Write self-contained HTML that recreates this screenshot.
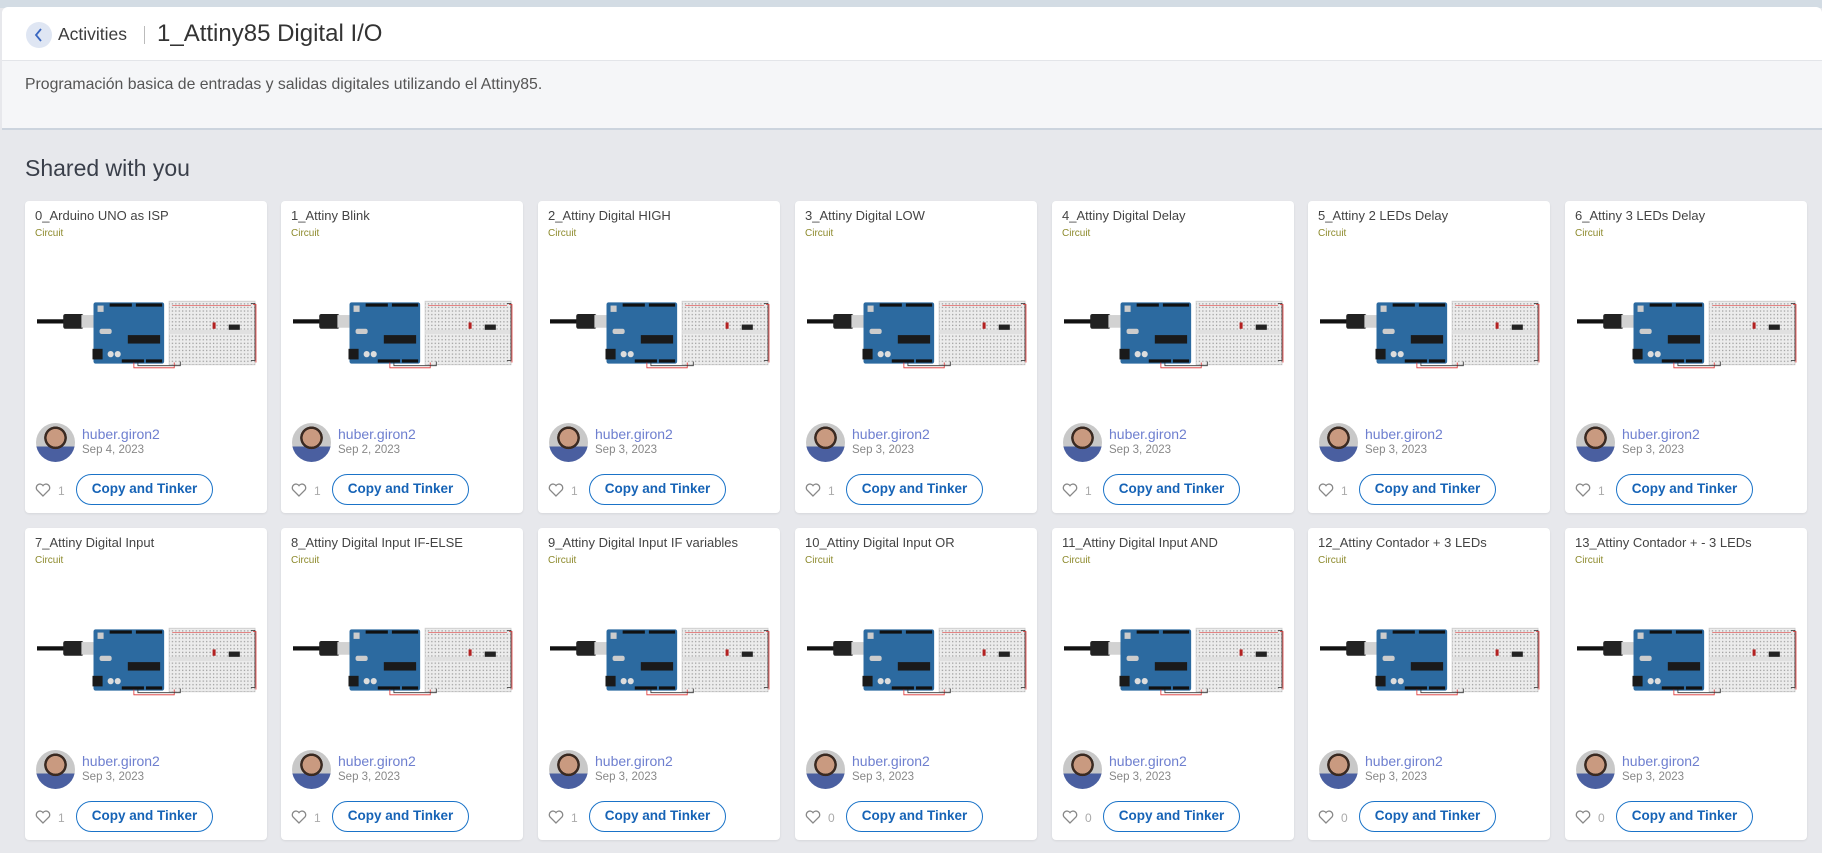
<!DOCTYPE html>
<html><head><meta charset="utf-8">
<style>
*{box-sizing:border-box;margin:0;padding:0}
body{width:1822px;height:853px;overflow:hidden;background:#e7e8ec;font-family:"Liberation Sans",sans-serif;position:relative}
.top{position:absolute;left:0;top:0;width:1822px;height:8px;background:#d3dce4}
.hdr{position:absolute;left:2px;top:7px;width:1820px;height:54px;background:#fff;border-radius:6px 6px 0 0;border-bottom:1px solid #e3e5e9}
.desc{position:absolute;left:2px;top:61px;width:1820px;height:69px;background:#f5f6f8;border-bottom:2px solid #ccd4de}
.back{position:absolute;left:26px;top:22px;width:26px;height:26px;border-radius:50%;background:#dfe6f3}
.crumb{position:absolute;left:58px;top:24px;font-size:17.5px;color:#3c3c3c}
.sep{position:absolute;left:144px;top:26px;width:1px;height:18px;background:#bbb}
.title{position:absolute;left:157px;top:20px;font-size:24px;color:#333}
.dtext{position:absolute;left:25px;top:76px;font-size:15.8px;color:#555}
.sh{position:absolute;left:25px;top:155px;font-size:23px;color:#3a3f4a}
.card{position:absolute;width:242px;height:312px;background:#fff;border-radius:4px;box-shadow:0 1px 2px rgba(0,0,0,.08)}
.card .t{position:absolute;left:10px;top:7px;font-size:13px;color:#444;white-space:nowrap}
.card .c{position:absolute;left:10px;top:27px;font-size:10px;color:#8d8a2c}
.card svg.img{position:absolute;left:12px;top:94px}
.av{position:absolute;left:11px;top:222px;width:39px;height:39px;border-radius:50%;background:radial-gradient(circle at 50% 38%,#c99a80 0 28%,#3a2a22 29% 36%,transparent 37%),linear-gradient(#c8c8c8 0 60%,#4a5fa0 60%)}
.nm{position:absolute;left:57px;top:225px;font-size:14px;color:#6e7fcf}
.dt{position:absolute;left:57px;top:243px;font-size:11.5px;color:#888}
.hr{position:absolute;left:10px;top:282px}
.ct{position:absolute;left:33px;top:283px;font-size:12px;color:#aaa}
.btn{position:absolute;left:51px;top:273px;width:137px;height:31px;border:1.5px solid #1a73c8;border-radius:16px;color:#1663b6;font-weight:bold;font-size:13.5px;text-align:center;line-height:28px}
</style></head><body>
<svg width="0" height="0" style="position:absolute">
<defs>
<pattern id="d" width="3.4" height="3.4" patternUnits="userSpaceOnUse"><rect x="1" y="1" width="1.2" height="1.2" fill="#9a9a9a"/></pattern>
<symbol id="ard" viewBox="0 0 220 72">
<rect x="0" y="23" width="30" height="4" fill="#111"/><rect x="26" y="18" width="20" height="14" rx="2" fill="#222"/><rect x="44" y="19" width="14" height="12" fill="#d2d2d2"/>
<rect x="56" y="7" width="70" height="58" rx="2" fill="#2c6aa0"/>
<rect x="72" y="8" width="22" height="3" fill="#111"/><rect x="98" y="8" width="26" height="3" fill="#111"/>
<rect x="60" y="10" width="6" height="6" fill="#ccc"/><rect x="90" y="38" width="32" height="8" fill="#1a1a1a"/>
<rect x="55" y="51" width="10" height="10" fill="#1a1a1a"/><circle cx="73" cy="56" r="3" fill="#ddd"/><circle cx="80" cy="56" r="3" fill="#ddd"/>
<rect x="62" y="32" width="12" height="5" rx="2" fill="#ccc"/><rect x="84" y="61" width="22" height="3" fill="#111"/><rect x="108" y="61" width="16" height="3" fill="#111"/>
<rect x="131" y="6" width="85" height="60" fill="#ececec" stroke="#d0d0d0"/>
<rect x="131" y="6" width="85" height="60" fill="url(#d)"/>
<rect x="131" y="33" width="85" height="4" fill="#e0e0e0"/>
<line x1="134" y1="10" x2="212" y2="10" stroke="#e06060" stroke-width=".7"/>
<rect x="190" y="28" width="11" height="5" fill="#222"/><rect x="174" y="26" width="3" height="6" fill="#b32020"/>
<path d="M96 64v5h40v-5" stroke="#d33" fill="none" stroke-width=".8"/><path d="M100 64v3h42v-4" stroke="#333" fill="none" stroke-width=".8"/>
<path d="M212 8h4v54h-4" stroke="#444" fill="none" stroke-width=".8"/><path d="M214 9h3v55" stroke="#d33" fill="none" stroke-width=".8"/>
</symbol>
<symbol id="heart" viewBox="0 0 16 14"><path d="M8 13L2 7A3.3 3.3 0 0 1 8 2.6A3.3 3.3 0 0 1 14 7Z" fill="none" stroke="#888" stroke-width="1.3"/></symbol>
</defs></svg>
<div class="top"></div>
<div class="hdr"></div>
<div class="back"><svg width="26" height="26"><path d="M15 7l-5 6 5 6" stroke="#3a67c0" stroke-width="1.8" fill="none"/></svg></div>
<div class="crumb">Activities</div><div class="sep"></div>
<div class="title">1_Attiny85 Digital I/O</div>
<div class="desc"></div>
<div class="dtext">Programación basica de entradas y salidas digitales utilizando el Attiny85.</div>
<div class="sh">Shared with you</div>

<div class="card" style="left:25px;top:201px"><div class="t">0_Arduino UNO as ISP</div><div class="c">Circuit</div><svg class="img" width="222" height="76" viewBox="0 0 220 72" preserveAspectRatio="none"><use href="#ard"/></svg><div class="av"></div><div class="nm">huber.giron2</div><div class="dt">Sep 4, 2023</div><svg class="hr" width="16" height="14"><use href="#heart"/></svg><div class="ct">1</div><div class="btn">Copy and Tinker</div></div>
<div class="card" style="left:281px;top:201px"><div class="t">1_Attiny Blink</div><div class="c">Circuit</div><svg class="img" width="222" height="76" viewBox="0 0 220 72" preserveAspectRatio="none"><use href="#ard"/></svg><div class="av"></div><div class="nm">huber.giron2</div><div class="dt">Sep 2, 2023</div><svg class="hr" width="16" height="14"><use href="#heart"/></svg><div class="ct">1</div><div class="btn">Copy and Tinker</div></div>
<div class="card" style="left:538px;top:201px"><div class="t">2_Attiny Digital HIGH</div><div class="c">Circuit</div><svg class="img" width="222" height="76" viewBox="0 0 220 72" preserveAspectRatio="none"><use href="#ard"/></svg><div class="av"></div><div class="nm">huber.giron2</div><div class="dt">Sep 3, 2023</div><svg class="hr" width="16" height="14"><use href="#heart"/></svg><div class="ct">1</div><div class="btn">Copy and Tinker</div></div>
<div class="card" style="left:795px;top:201px"><div class="t">3_Attiny Digital LOW</div><div class="c">Circuit</div><svg class="img" width="222" height="76" viewBox="0 0 220 72" preserveAspectRatio="none"><use href="#ard"/></svg><div class="av"></div><div class="nm">huber.giron2</div><div class="dt">Sep 3, 2023</div><svg class="hr" width="16" height="14"><use href="#heart"/></svg><div class="ct">1</div><div class="btn">Copy and Tinker</div></div>
<div class="card" style="left:1052px;top:201px"><div class="t">4_Attiny Digital Delay</div><div class="c">Circuit</div><svg class="img" width="222" height="76" viewBox="0 0 220 72" preserveAspectRatio="none"><use href="#ard"/></svg><div class="av"></div><div class="nm">huber.giron2</div><div class="dt">Sep 3, 2023</div><svg class="hr" width="16" height="14"><use href="#heart"/></svg><div class="ct">1</div><div class="btn">Copy and Tinker</div></div>
<div class="card" style="left:1308px;top:201px"><div class="t">5_Attiny 2 LEDs Delay</div><div class="c">Circuit</div><svg class="img" width="222" height="76" viewBox="0 0 220 72" preserveAspectRatio="none"><use href="#ard"/></svg><div class="av"></div><div class="nm">huber.giron2</div><div class="dt">Sep 3, 2023</div><svg class="hr" width="16" height="14"><use href="#heart"/></svg><div class="ct">1</div><div class="btn">Copy and Tinker</div></div>
<div class="card" style="left:1565px;top:201px"><div class="t">6_Attiny 3 LEDs Delay</div><div class="c">Circuit</div><svg class="img" width="222" height="76" viewBox="0 0 220 72" preserveAspectRatio="none"><use href="#ard"/></svg><div class="av"></div><div class="nm">huber.giron2</div><div class="dt">Sep 3, 2023</div><svg class="hr" width="16" height="14"><use href="#heart"/></svg><div class="ct">1</div><div class="btn">Copy and Tinker</div></div>

<div class="card" style="left:25px;top:528px"><div class="t">7_Attiny Digital Input</div><div class="c">Circuit</div><svg class="img" width="222" height="76" viewBox="0 0 220 72" preserveAspectRatio="none"><use href="#ard"/></svg><div class="av"></div><div class="nm">huber.giron2</div><div class="dt">Sep 3, 2023</div><svg class="hr" width="16" height="14"><use href="#heart"/></svg><div class="ct">1</div><div class="btn">Copy and Tinker</div></div>
<div class="card" style="left:281px;top:528px"><div class="t">8_Attiny Digital Input IF-ELSE</div><div class="c">Circuit</div><svg class="img" width="222" height="76" viewBox="0 0 220 72" preserveAspectRatio="none"><use href="#ard"/></svg><div class="av"></div><div class="nm">huber.giron2</div><div class="dt">Sep 3, 2023</div><svg class="hr" width="16" height="14"><use href="#heart"/></svg><div class="ct">1</div><div class="btn">Copy and Tinker</div></div>
<div class="card" style="left:538px;top:528px"><div class="t">9_Attiny Digital Input IF variables</div><div class="c">Circuit</div><svg class="img" width="222" height="76" viewBox="0 0 220 72" preserveAspectRatio="none"><use href="#ard"/></svg><div class="av"></div><div class="nm">huber.giron2</div><div class="dt">Sep 3, 2023</div><svg class="hr" width="16" height="14"><use href="#heart"/></svg><div class="ct">1</div><div class="btn">Copy and Tinker</div></div>
<div class="card" style="left:795px;top:528px"><div class="t">10_Attiny Digital Input OR</div><div class="c">Circuit</div><svg class="img" width="222" height="76" viewBox="0 0 220 72" preserveAspectRatio="none"><use href="#ard"/></svg><div class="av"></div><div class="nm">huber.giron2</div><div class="dt">Sep 3, 2023</div><svg class="hr" width="16" height="14"><use href="#heart"/></svg><div class="ct">0</div><div class="btn">Copy and Tinker</div></div>
<div class="card" style="left:1052px;top:528px"><div class="t">11_Attiny Digital Input AND</div><div class="c">Circuit</div><svg class="img" width="222" height="76" viewBox="0 0 220 72" preserveAspectRatio="none"><use href="#ard"/></svg><div class="av"></div><div class="nm">huber.giron2</div><div class="dt">Sep 3, 2023</div><svg class="hr" width="16" height="14"><use href="#heart"/></svg><div class="ct">0</div><div class="btn">Copy and Tinker</div></div>
<div class="card" style="left:1308px;top:528px"><div class="t">12_Attiny Contador + 3 LEDs</div><div class="c">Circuit</div><svg class="img" width="222" height="76" viewBox="0 0 220 72" preserveAspectRatio="none"><use href="#ard"/></svg><div class="av"></div><div class="nm">huber.giron2</div><div class="dt">Sep 3, 2023</div><svg class="hr" width="16" height="14"><use href="#heart"/></svg><div class="ct">0</div><div class="btn">Copy and Tinker</div></div>
<div class="card" style="left:1565px;top:528px"><div class="t">13_Attiny Contador + - 3 LEDs</div><div class="c">Circuit</div><svg class="img" width="222" height="76" viewBox="0 0 220 72" preserveAspectRatio="none"><use href="#ard"/></svg><div class="av"></div><div class="nm">huber.giron2</div><div class="dt">Sep 3, 2023</div><svg class="hr" width="16" height="14"><use href="#heart"/></svg><div class="ct">0</div><div class="btn">Copy and Tinker</div></div>
</body></html>
